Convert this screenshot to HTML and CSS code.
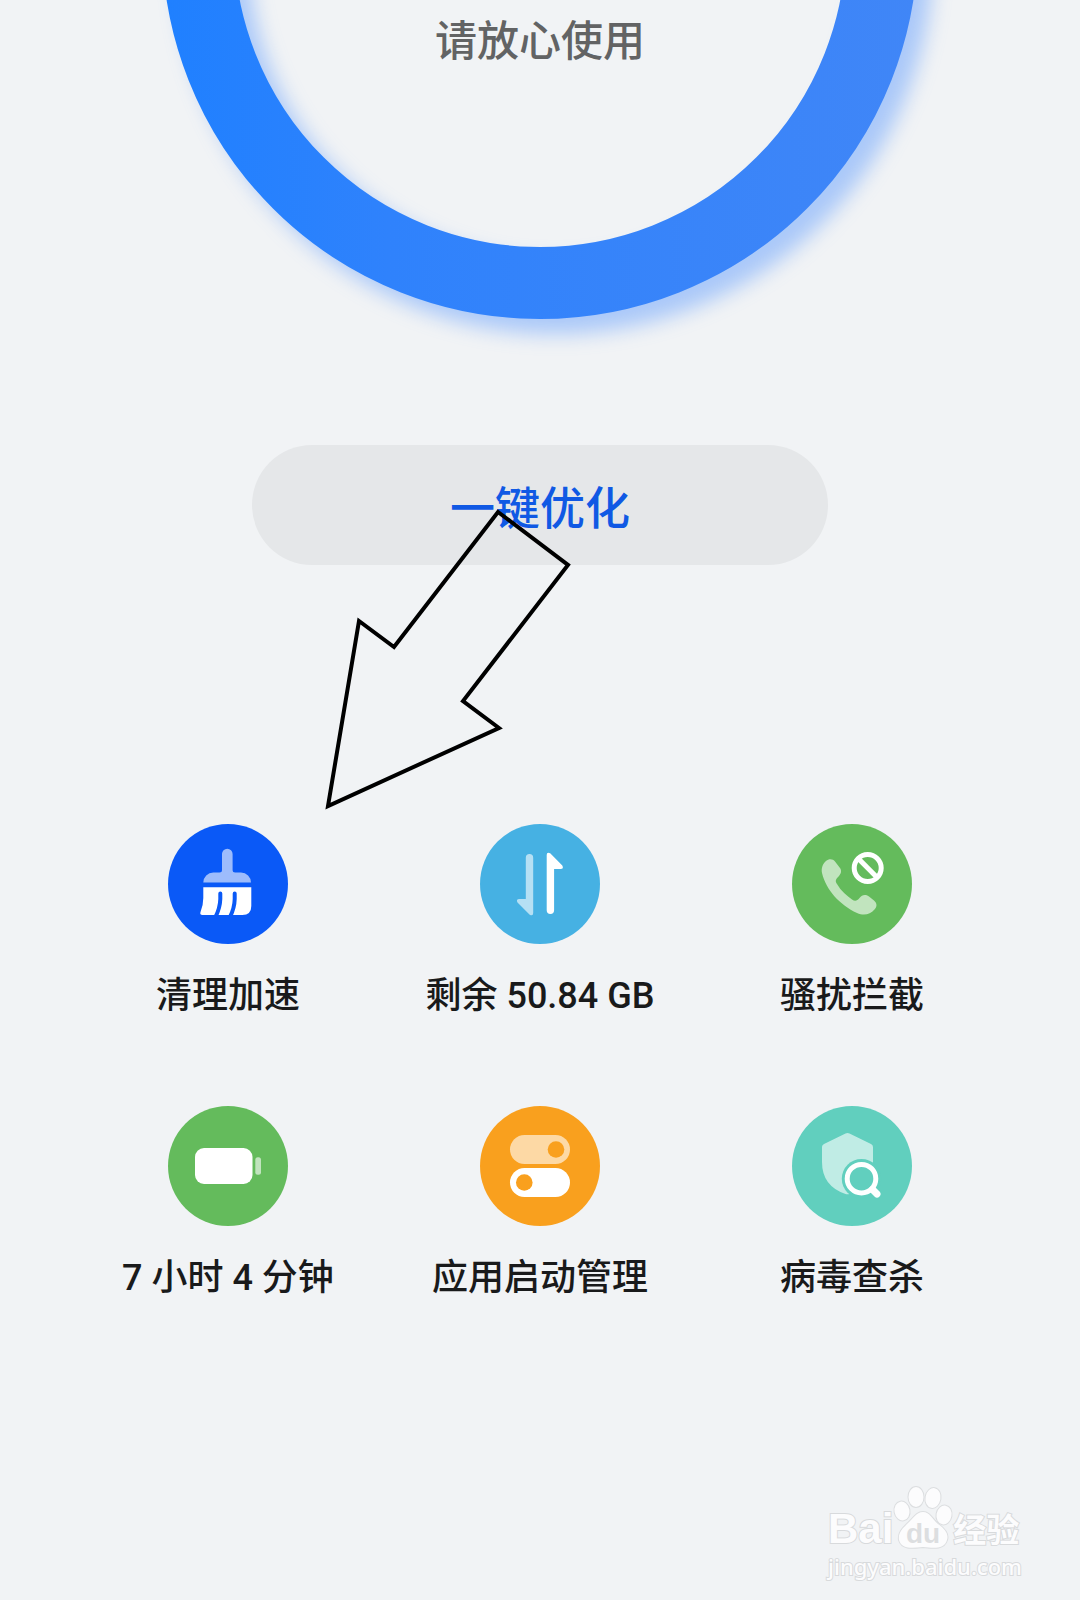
FILE: index.html
```
<!DOCTYPE html>
<html lang="zh-CN">

<head>
    <meta charset="UTF-8">
    <meta name="viewport" content="width=device-width, initial-scale=1.0">
    <title>手机管家</title>
    <link rel="stylesheet" href="styles.css">
</head>

<body>
    <header class="status">
        <svg class="ring" viewBox="0 0 756 756" aria-hidden="true">
            <defs>
                <linearGradient id="ringColor" gradientUnits="userSpaceOnUse" x1="0" y1="0" x2="756" y2="0">
                    <stop offset="0" stop-color="#1f80ff" />
                    <stop offset="0.3" stop-color="#2f82fc" />
                    <stop offset="1" stop-color="#4086f7" />
                </linearGradient>
            </defs>
            <circle cx="378" cy="378" r="342" fill="none" stroke="url(#ringColor)" stroke-width="72" />
        </svg>
        <p class="status-text">请放心使用</p>
    </header>

    <main>
        <div class="optimize">
            <button class="optimize-button" type="button">一键优化</button>
            <svg class="arrow" viewBox="0 0 260 320" aria-hidden="true">
                <path d="M178 12 L248 65 L143 201 L179 228 L8 306 L39 121 L74 147 Z" />
            </svg>
        </div>

        <nav class="tools">
            <a class="tool" href="#">
                <svg class="icon clean" viewBox="0 0 120 120" aria-hidden="true">
                    <path class="soft" d="M54 30 a5.3 5.3 0 0 1 10.6 0 V46 q0 2.5 2.5 2.5 H73 a10 10 0 0 1 10 10 H35.3 a10 10 0 0 1 10 -10 H51.5 q2.5 0 2.5 -2.5 Z" />
                    <path class="solid" d="M35.3 63.3 H83.3 V82 q0 9 -9 9 H34.5 q-3 0 -2 -3 Q35.3 81 35.3 74 Z" />
                    <path class="slit" d="M52.3 69.5 V75 Q52 84 47.5 93 M66.7 69.5 V75 Q66.5 84 62 93" />
                </svg>
                <span>清理加速</span>
            </a>
            <a class="tool" href="#">
                <svg class="icon data" viewBox="0 0 120 120" aria-hidden="true">
                    <path class="soft" d="M45.8 33.7 a3.7 3.7 0 0 1 7.4 0 V89 q0 3.5 -3.5 1.8 L37.5 78.5 q-1.8 -3.5 1.8 -3.5 H45.8 Z" />
                    <path class="solid" d="M66.7 31 q0 -3.5 3.5 -1.8 L82.3 41.5 q1.8 3.5 -1.8 3.5 H74.1 V86.3 a3.7 3.7 0 0 1 -7.4 0 Z" />
                </svg>
                <span>剩余 50.84 GB</span>
            </a>
            <a class="tool" href="#">
                <svg class="icon block" viewBox="0 0 120 120" aria-hidden="true">
                    <path class="soft" d="M34 37 C37 34.5 41 35 43 37.5 L48 44 C50 47 49 49.5 47 52 C43.5 55.5 43 57 45 60 C49 67 55 72 60 75.5 C63 77.5 65 77 67.5 74 C70 71 73 70 77 72.5 L82 76.5 C85.5 79.5 85 83 82.5 85.5 C78 90.5 72 92 65 89 C48 81 34 66 30 49 C29 44 31 39.5 34 37 Z" />
                    <circle class="line" cx="75.7" cy="44" r="13.5" />
                    <path class="line" d="M66 34.3 L85.4 53.7" />
                </svg>
                <span>骚扰拦截</span>
            </a>
            <a class="tool" href="#">
                <svg class="icon battery" viewBox="0 0 120 120" aria-hidden="true">
                    <rect class="solid" x="27" y="42" width="57.5" height="36" rx="9" />
                    <rect class="soft" x="87.3" y="51.3" width="5.7" height="17.4" rx="2.5" />
                </svg>
                <span>7 小时 4 分钟</span>
            </a>
            <a class="tool" href="#">
                <svg class="icon launch" viewBox="0 0 120 120" aria-hidden="true">
                    <rect class="soft" x="30" y="29" width="60" height="29" rx="14.5" />
                    <circle class="hole" cx="76" cy="43.5" r="8.3" />
                    <rect class="solid" x="30" y="62" width="60" height="29" rx="14.5" />
                    <circle class="hole" cx="44.3" cy="76.5" r="8.3" />
                </svg>
                <span>应用启动管理</span>
            </a>
            <a class="tool" href="#">
                <svg class="icon virus" viewBox="0 0 120 120" aria-hidden="true">
                    <path class="soft" d="M53.5 27.5 Q55.5 26.3 57.5 27.5 L79 38 Q81 39 81 41 V60 Q81 80 57.5 88 Q55.5 88.5 53.5 88 Q30 80 30 56 V41 Q30 39 32 38 Z" />
                    <circle class="hole" cx="69.5" cy="72.7" r="19.7" />
                    <circle class="line" cx="69.5" cy="72.7" r="14.3" />
                    <path class="handle" d="M80.5 83.5 L85 88" />
                </svg>
                <span>病毒查杀</span>
            </a>
        </nav>
    </main>

    <footer class="watermark">
        <div class="brand">
            <span class="latin">Bai</span>
            <svg class="paw" viewBox="0 0 60 64" aria-hidden="true">
                <ellipse cx="9" cy="25" rx="7.5" ry="9.5" transform="rotate(-10 9 25)" />
                <ellipse cx="23" cy="11" rx="7.5" ry="10" />
                <ellipse cx="40" cy="12" rx="7.5" ry="10" transform="rotate(10 40 12)" />
                <ellipse cx="51" cy="29" rx="7.5" ry="9.5" transform="rotate(10 51 29)" />
                <path d="M30 26 C37 26 39 33 45 38 C52 43 56 48 54 54 C51 64 40 62 30 61 C20 62 9 64 6 54 C5 47 9 43 14 38 C20 33 23 26 30 26 Z" />
                <text x="30" y="57" text-anchor="middle">du</text>
            </svg>
            <span class="hanzi">经验</span>
        </div>
        <div class="site">jingyan.baidu.com</div>
    </footer>
</body>

</html>
```
FILE: styles.css
```
* {
    box-sizing: border-box;
}

body {
    margin: 0;
    background-color: #f1f3f5;
    color: #191a1b;
    font-family: Roboto, "Noto Sans CJK SC", sans-serif;
    font-weight: 500;
}

/* only the lower part of the ring is on the page */
.status {
    display: grid;
    grid-template-rows: 319px;
    justify-items: center;
}

.ring {
    grid-area: 1 / 1;
    align-self: end;
    width: 756px;
    height: 756px;
    overflow: visible;
    filter: drop-shadow(15px 15px 10px rgba(66, 138, 255, 0.4));
}

.status-text {
    grid-area: 1 / 1;
    position: relative;
    margin: 12px 0 0;
    font-size: 42px;
    line-height: 60px;
    color: #626364;
}

.optimize {
    position: relative;
    width: 576px;
    margin: 126px auto 0;
}

.optimize-button {
    display: block;
    width: 100%;
    height: 120px;
    padding: 0;
    border: none;
    border-radius: 60px;
    background-color: #e5e7e9;
    color: #1059e4;
    font-family: inherit;
    font-size: 45px;
    font-weight: 500;
    cursor: pointer;
}

.arrow {
    position: absolute;
    top: 55px;
    left: 68px;
    width: 260px;
    height: 320px;
    pointer-events: none;
}

.arrow path {
    fill: none;
    stroke: #000;
    stroke-width: 4;
}

.tools {
    display: grid;
    grid-template-columns: repeat(3, 1fr);
    row-gap: 86px;
    margin: 259px 72px 0;
}

.tool {
    display: flex;
    flex-direction: column;
    align-items: center;
    gap: 28px;
    color: inherit;
    font-size: 36px;
    line-height: 48px;
    text-decoration: none;
    white-space: nowrap;
}

.icon {
    width: 120px;
    height: 120px;
    border-radius: 50%;
    background-color: var(--color);
}

.clean {
    --color: #0a59f7;
}

.data {
    --color: #46b1e3;
}

.block,
.battery {
    --color: #64bb5c;
}

.launch {
    --color: #f9a01e;
}

.virus {
    --color: #61cfbe;
}

.solid {
    fill: #fff;
}

.soft {
    fill: #fff;
    opacity: 0.6;
}

.hole {
    fill: var(--color);
}

.slit {
    fill: none;
    stroke: var(--color);
    stroke-width: 4;
    stroke-linecap: round;
}

.line {
    fill: none;
    stroke: #fff;
    stroke-width: 5;
}

.handle {
    fill: none;
    stroke: #fff;
    stroke-width: 7;
    stroke-linecap: round;
}

.watermark {
    width: 192px;
    margin: 184px 60px 0 auto;
    color: #fcfcfd;
    -webkit-text-stroke: 2px #d8dadc;
    paint-order: stroke fill;
}

.brand {
    display: flex;
    align-items: flex-end;
    height: 64px;
}

.latin {
    font-family: "Liberation Sans", sans-serif;
    font-size: 42px;
    font-weight: 700;
    line-height: 42px;
}

.paw {
    flex: none;
    width: 60px;
    height: 64px;
    overflow: visible;
    fill: #fcfcfd;
    stroke: #dcdee0;
    stroke-width: 2;
}

.paw text {
    font-family: "Liberation Sans", sans-serif;
    font-size: 28px;
    font-weight: 700;
    fill: #dcdee0;
    stroke: none;
    -webkit-text-stroke: 0;
}

.hanzi {
    font-size: 33px;
    font-weight: 700;
    line-height: 38px;
}

.site {
    font-family: "Noto Sans", sans-serif;
    font-size: 22px;
    line-height: 32px;
}
```
